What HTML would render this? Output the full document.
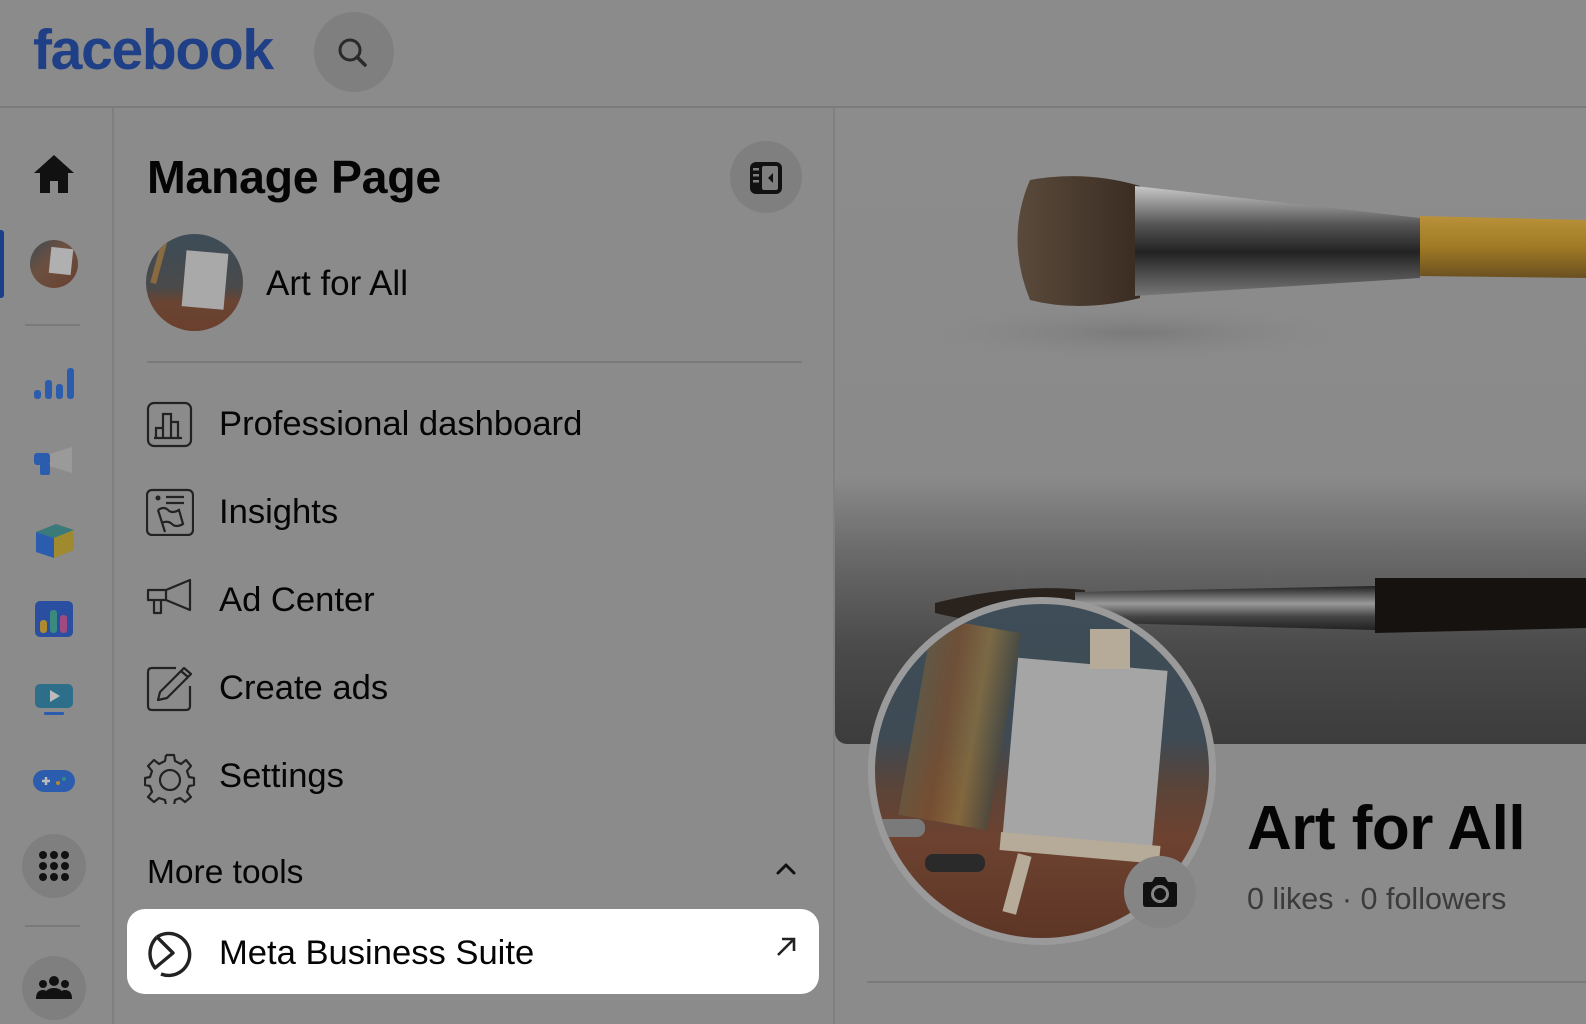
<!DOCTYPE html>
<html><head><meta charset="utf-8"><style>
*{margin:0;padding:0;box-sizing:border-box}
body{width:1586px;height:1024px;background:#8b8b8b;font-family:"Liberation Sans",sans-serif;position:relative;overflow:hidden;color:#050505}
.a{position:absolute}
.t{position:absolute;white-space:nowrap;line-height:1}
</style></head><body>
<!-- header -->
<div class="a" style="left:0;top:106px;width:1586px;height:2px;background:#7b7b7b"></div>
<div class="t" style="left:33px;top:22px;font-size:57px;font-weight:bold;color:#1f3f86;letter-spacing:-1.3px">facebook</div>
<div class="a" style="left:314px;top:12px;width:80px;height:80px;border-radius:50%;background:#7f7f7f"></div>
<svg class="a" style="left:336px;top:36px" width="34" height="34" viewBox="0 0 34 34"><circle cx="14" cy="14" r="10" fill="none" stroke="#2a2a2a" stroke-width="3"/><line x1="21" y1="21" x2="29" y2="29" stroke="#2a2a2a" stroke-width="3.5" stroke-linecap="round"/></svg>

<!-- left rail -->
<div class="a" style="left:112px;top:108px;width:2px;height:916px;background:#808080"></div>
<div class="a" style="left:833px;top:108px;width:2px;height:916px;background:#808080"></div>
<svg class="a" style="left:32px;top:153px" width="44" height="42" viewBox="0 0 44 42"><path d="M22 2 L42 20 L36 20 L36 40 L26 40 L26 28 L18 28 L18 40 L8 40 L8 20 L2 20 Z" fill="#111"/></svg>
<div class="a" style="left:0;top:230px;width:4px;height:68px;background:#1c3f8a;border-radius:0 3px 3px 0"></div>
<div class="a" style="left:30px;top:240px;width:48px;height:48px;border-radius:50%;background:linear-gradient(135deg,#3c4a55 0%,#6b5040 40%,#6a4030 100%);overflow:hidden"><div class="a" style="left:20px;top:8px;width:22px;height:26px;background:#b0b0b0;transform:rotate(6deg)"></div></div>
<div class="a" style="left:25px;top:324px;width:55px;height:2px;background:#7a7a7a"></div>
<svg class="a" style="left:32px;top:362px" width="44" height="40" viewBox="0 0 44 40"><rect x="2" y="28" width="7" height="9" rx="3" fill="#2b5cad"/><rect x="13" y="18" width="7" height="19" rx="3" fill="#2b5cad"/><rect x="24" y="22" width="7" height="15" rx="3" fill="#2b5cad"/><rect x="35" y="6" width="7" height="31" rx="3" fill="#2b5cad"/></svg>
<svg class="a" style="left:32px;top:443px" width="44" height="40" viewBox="0 0 44 40"><path d="M14 12 L40 4 L40 30 L14 22 Z" fill="#9a9a9a"/><rect x="2" y="10" width="16" height="12" rx="3" fill="#2b5cad"/><rect x="8" y="20" width="10" height="12" rx="2" fill="#2b5cad"/></svg>
<svg class="a" style="left:32px;top:520px" width="44" height="40" viewBox="0 0 44 40"><path d="M4 12 L24 4 L42 10 L22 18 Z" fill="#3a7a78"/><path d="M4 12 L22 18 L22 38 L4 32 Z" fill="#2b5cad"/><path d="M22 18 L42 10 L42 30 L22 38 Z" fill="#a08a30"/></svg>
<svg class="a" style="left:34px;top:600px" width="40" height="38" viewBox="0 0 40 38"><rect x="1" y="1" width="38" height="36" rx="5" fill="#2b4fa0"/><rect x="6" y="20" width="7" height="13" rx="3" fill="#b08a30"/><rect x="16" y="10" width="7" height="23" rx="3" fill="#3a8a80"/><rect x="26" y="15" width="7" height="18" rx="3" fill="#a04a80"/></svg>
<svg class="a" style="left:34px;top:683px" width="40" height="34" viewBox="0 0 40 34"><rect x="1" y="1" width="38" height="24" rx="5" fill="#2d6f8a"/><path d="M16 7 L26 13 L16 19 Z" fill="#bbb"/><rect x="10" y="29" width="20" height="3" rx="1" fill="#2b5cad"/></svg>
<svg class="a" style="left:32px;top:768px" width="44" height="26" viewBox="0 0 44 26"><rect x="1" y="2" width="42" height="22" rx="11" fill="#2b5cad"/><path d="M10 13 h8 M14 9 v8" stroke="#bbb" stroke-width="2.5"/><circle cx="26" cy="15" r="2" fill="#b08a30"/><circle cx="32" cy="11" r="2" fill="#3a8a80"/></svg>
<div class="a" style="left:22px;top:834px;width:64px;height:64px;border-radius:50%;background:#7f7f7f"></div>
<svg class="a" style="left:38px;top:850px" width="32" height="32" viewBox="0 0 32 32" fill="#111"><circle cx="5" cy="5" r="4"/><circle cx="16" cy="5" r="4"/><circle cx="27" cy="5" r="4"/><circle cx="5" cy="16" r="4"/><circle cx="16" cy="16" r="4"/><circle cx="27" cy="16" r="4"/><circle cx="5" cy="27" r="4"/><circle cx="16" cy="27" r="4"/><circle cx="27" cy="27" r="4"/></svg>
<div class="a" style="left:25px;top:925px;width:55px;height:2px;background:#7a7a7a"></div>
<div class="a" style="left:22px;top:956px;width:64px;height:64px;border-radius:50%;background:#7f7f7f"></div>
<svg class="a" style="left:36px;top:975px" width="36" height="26" viewBox="0 0 36 26" fill="#111"><circle cx="18" cy="6" r="5"/><circle cx="7" cy="9" r="4"/><circle cx="29" cy="9" r="4"/><path d="M8 24 Q8 13 18 13 Q28 13 28 24 Z"/><path d="M0 24 Q0 15 7 15 Q10 15 11 17 Q8 20 8 24 Z"/><path d="M36 24 Q36 15 29 15 Q26 15 25 17 Q28 20 28 24 Z"/></svg>

<!-- manage page panel -->
<div class="t" style="left:147px;top:154px;font-size:46.5px;font-weight:bold;letter-spacing:-0.3px">Manage Page</div>
<div class="a" style="left:730px;top:141px;width:72px;height:72px;border-radius:50%;background:#7f7f7f"></div>
<svg class="a" style="left:748px;top:160px" width="36" height="36" viewBox="0 0 36 36"><rect x="2" y="2" width="32" height="32" rx="6" fill="#111"/><rect x="14" y="6" width="16" height="24" rx="2" fill="#7f7f7f"/><path d="M25 13 L20 18 L25 23 Z" fill="#111"/><rect x="5" y="8" width="6" height="2.5" fill="#7f7f7f"/><rect x="5" y="14" width="6" height="2.5" fill="#7f7f7f"/><rect x="5" y="20" width="6" height="2.5" fill="#7f7f7f"/></svg>
<div class="a" style="left:146px;top:234px;width:97px;height:97px;border-radius:50%;overflow:hidden;background:linear-gradient(180deg,#3c4c58 0%,#4a4a4a 55%,#6a4432 70%,#6b3f2e 100%)"><div class="a" style="left:38px;top:18px;width:42px;height:56px;background:#a9a9a9;transform:rotate(5deg)"></div><div class="a" style="left:10px;top:5px;width:6px;height:45px;background:#8a6a40;transform:rotate(15deg)"></div></div>
<div class="t" style="left:266px;top:266px;font-size:35px">Art for All</div>
<div class="a" style="left:147px;top:361px;width:655px;height:2px;background:#7a7a7a"></div>

<svg class="a" style="left:146px;top:400px" width="48" height="48" viewBox="0 0 48 48" fill="none" stroke="#222" stroke-width="2.2"><rect x="2" y="3" width="43" height="43" rx="6"/><path d="M10 38 V28 H17 V38 M17 38 V14 H25 V38 M25 38 V22 H32 V38 M8 38 H36"/></svg>
<div class="t" style="left:219px;top:407px;font-size:34.6px">Professional dashboard</div>
<svg class="a" style="left:146px;top:488px" width="48" height="48" viewBox="0 0 48 48" fill="none" stroke="#222" stroke-width="2.2"><rect x="1" y="2" width="46" height="45" rx="5"/><circle cx="12" cy="10" r="2.5" fill="#222" stroke="none"/><path d="M20 9 H38 M20 15 H38 M12 22 L19 44 M12 22 Q18 18 22 22 Q26 26 33 22 L37 36 Q30 40 26 36 Q22 32 15 35"/></svg>
<div class="t" style="left:219px;top:495px;font-size:34.6px">Insights</div>
<svg class="a" style="left:146px;top:578px" width="48" height="44" viewBox="0 0 48 44" fill="none" stroke="#222" stroke-width="2.2" stroke-linejoin="round"><path d="M2 12 H20 L44 2 V32 L20 22 H2 Z M20 12 V22 M8 22 V35 H15 V22"/></svg>
<div class="t" style="left:219px;top:583px;font-size:34.6px">Ad Center</div>
<svg class="a" style="left:146px;top:664px" width="50" height="48" viewBox="0 0 50 48" fill="none" stroke="#222" stroke-width="2.2" stroke-linejoin="round"><path d="M30 4 H6 Q2 4 2 8 V42 Q2 46 6 46 H40 Q44 46 44 42 V22"/><path d="M12 36 L14 28 L38 4 L45 10 L21 34 Z M35 7 L42 13"/></svg>
<div class="t" style="left:219px;top:671px;font-size:34.6px">Create ads</div>
<svg class="a" style="left:144px;top:752px" width="52" height="52" viewBox="0 0 52 52" fill="none" stroke="#222" stroke-width="2.2" stroke-linejoin="round"><path d="M22 3 H30 L31 9 L37 12 L42 8 L47 14 L43 19 L45 25 L50 26 V33 L45 34 L43 40 L47 45 L41 50 L36 46 L31 48 L30 53 M22 3 L21 9 L15 12 L10 8 L4 14 L8 19 L6 25 L1 26 V33 L6 34 L8 40 L4 45 L10 50 L15 46 L21 48 L22 53"/><circle cx="26" cy="28" r="10"/></svg>
<div class="t" style="left:219px;top:759px;font-size:34.6px">Settings</div>

<div class="t" style="left:147px;top:856px;font-size:33.5px">More tools</div>
<svg class="a" style="left:775px;top:862px" width="22" height="14" viewBox="0 0 22 14"><path d="M3 11 L11 3 L19 11" fill="none" stroke="#111" stroke-width="3" stroke-linecap="round" stroke-linejoin="round"/></svg>
<div class="a" style="left:127px;top:909px;width:692px;height:85px;border-radius:18px;background:#fff"></div>
<svg class="a" style="left:147px;top:930px" width="48" height="48" viewBox="0 0 48 48" fill="none" stroke="#222" stroke-width="3.4" stroke-linejoin="round"><path d="M10 7 A21 21 0 1 1 14 44"/><path d="M10 7 L26 23 L8 38 Q3 31 3 24 Q3 14 10 7"/></svg>
<div class="t" style="left:219px;top:936px;font-size:34.6px">Meta Business Suite</div>
<svg class="a" style="left:774px;top:935px" width="24" height="24" viewBox="0 0 24 24"><path d="M4 20 L19 5 M8 4 H20 V16" fill="none" stroke="#222" stroke-width="2.6"/></svg>

<!-- cover -->
<div class="a" style="left:835px;top:108px;width:751px;height:636px;border-radius:0 0 0 12px;overflow:hidden;background:linear-gradient(180deg,#8c8c8c 0%,#8a8a8a 58%,#6a6a6a 70%,#4a4a4a 85%,#3c3c3c 100%)">
<svg width="751" height="636" viewBox="0 0 751 636">
<defs><linearGradient id="fer" x1="0" y1="0" x2="0" y2="1"><stop offset="0" stop-color="#c8c8c8"/><stop offset=".35" stop-color="#555"/><stop offset=".6" stop-color="#222"/><stop offset="1" stop-color="#777"/></linearGradient>
<linearGradient id="han" x1="0" y1="0" x2="0" y2="1"><stop offset="0" stop-color="#b9913a"/><stop offset=".5" stop-color="#a07a25"/><stop offset="1" stop-color="#6a5020"/></linearGradient>
<linearGradient id="br" x1="0" y1="0" x2="1" y2="0"><stop offset="0" stop-color="#5a4a3c"/><stop offset="1" stop-color="#3a2c22"/></linearGradient>
<linearGradient id="fer2" x1="0" y1="0" x2="0" y2="1"><stop offset="0" stop-color="#222"/><stop offset=".4" stop-color="#999"/><stop offset=".7" stop-color="#444"/><stop offset="1" stop-color="#222"/></linearGradient>
<radialGradient id="sh"><stop offset="0" stop-color="#7a7a7a"/><stop offset="1" stop-color="#8a8a8a" stop-opacity="0"/></radialGradient></defs>
<ellipse cx="300" cy="225" rx="230" ry="30" fill="url(#sh)"/>
<path d="M195 72 Q250 62 305 78 L305 190 Q245 205 195 192 Q170 130 195 72 Z" fill="url(#br)"/>
<path d="M300 78 L585 110 L585 170 L300 188 Z" fill="url(#fer)"/>
<path d="M585 108 L751 112 L751 170 L585 168 Z" fill="url(#han)"/>
<path d="M100 495 Q180 475 250 482 L250 515 Q170 522 100 505 Z" fill="#2a221c"/>
<path d="M240 484 L540 478 L540 522 L240 514 Z" fill="url(#fer2)"/>
<path d="M540 470 L751 470 L751 520 L540 525 Z" fill="#161210"/>
</svg></div>

<!-- profile -->
<div class="a" style="left:868px;top:597px;width:348px;height:348px;border-radius:50%;background:#9a9a9a"></div>
<div class="a" style="left:875px;top:604px;width:334px;height:334px;border-radius:50%;overflow:hidden;background:linear-gradient(180deg,#3e4d58 0%,#3e4a54 40%,#5a4438 55%,#6d4230 70%,#5e3626 100%)">
<div class="a" style="left:40px;top:20px;width:90px;height:200px;background:linear-gradient(90deg,#6a5a40,#7a5030,#8a7040,#4a4a40);transform:rotate(10deg);opacity:.8"></div>
<div class="a" style="left:135px;top:60px;width:150px;height:180px;background:#a5a5a5;transform:rotate(5deg)"></div>
<div class="a" style="left:125px;top:235px;width:160px;height:18px;background:#b6aa98;transform:rotate(5deg)"></div>
<div class="a" style="left:135px;top:250px;width:14px;height:60px;background:#b6aa98;transform:rotate(15deg)"></div>
<div class="a" style="left:215px;top:25px;width:40px;height:40px;background:#b6aa98"></div>
<div class="a" style="left:0px;top:215px;width:50px;height:18px;background:#7a7a7a;border-radius:8px"></div>
<div class="a" style="left:50px;top:250px;width:60px;height:18px;background:#2a2a2a;border-radius:8px"></div>
</div>
<div class="a" style="left:1124px;top:856px;width:72px;height:72px;border-radius:50%;background:#858585"></div>
<svg class="a" style="left:1142px;top:874px" width="36" height="34" viewBox="0 0 36 34"><path d="M4 8 H10 L13 3 H23 L26 8 H32 Q35 8 35 11 V30 Q35 33 32 33 H4 Q1 33 1 30 V11 Q1 8 4 8 Z" fill="#111"/><circle cx="18" cy="20" r="7.5" fill="none" stroke="#858585" stroke-width="3"/></svg>
<div class="t" style="left:1247px;top:798px;font-size:62px;font-weight:bold;letter-spacing:-0.5px">Art for All</div>
<div class="t" style="left:1247px;top:884px;font-size:30.5px;color:#3b3b3b">0 likes · 0 followers</div>
<div class="a" style="left:867px;top:981px;width:719px;height:2px;background:#7a7a7a"></div>
</body></html>
